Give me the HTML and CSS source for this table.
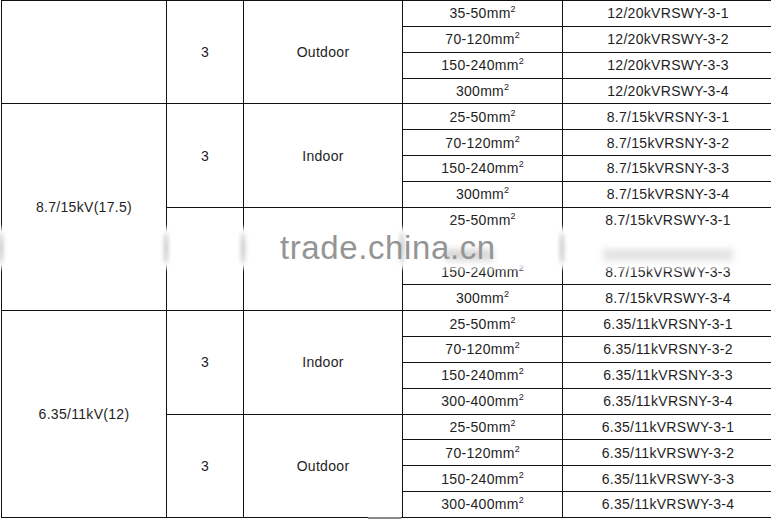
FILE: index.html
```html
<!DOCTYPE html>
<html>
<head>
<meta charset="utf-8">
<link rel="stylesheet" href="styles.css">
</head>
<body>
<div class="page">
  <table class="spec">
    <colgroup>
      <col class="c1"><col class="c2"><col class="c3"><col class="c4"><col class="c5">
    </colgroup>
    <tbody>
      <tr><td rowspan="4"></td><td rowspan="4">3</td><td rowspan="4">Outdoor</td><td>35-50mm<sup>2</sup></td><td>12/20kVRSWY-3-1</td></tr>
      <tr><td>70-120mm<sup>2</sup></td><td>12/20kVRSWY-3-2</td></tr>
      <tr><td>150-240mm<sup>2</sup></td><td>12/20kVRSWY-3-3</td></tr>
      <tr><td>300mm<sup>2</sup></td><td>12/20kVRSWY-3-4</td></tr>

      <tr><td rowspan="8">8.7/15kV(17.5)</td><td rowspan="4">3</td><td rowspan="4">Indoor</td><td>25-50mm<sup>2</sup></td><td>8.7/15kVRSNY-3-1</td></tr>
      <tr><td>70-120mm<sup>2</sup></td><td>8.7/15kVRSNY-3-2</td></tr>
      <tr><td>150-240mm<sup>2</sup></td><td>8.7/15kVRSNY-3-3</td></tr>
      <tr><td>300mm<sup>2</sup></td><td>8.7/15kVRSNY-3-4</td></tr>
      <tr><td rowspan="4"></td><td rowspan="4"></td><td>25-50mm<sup>2</sup></td><td>8.7/15kVRSWY-3-1</td></tr>
      <tr><td></td><td></td></tr>
      <tr><td>150-240mm<sup>2</sup></td><td>8.7/15kVRSWY-3-3</td></tr>
      <tr><td>300mm<sup>2</sup></td><td>8.7/15kVRSWY-3-4</td></tr>

      <tr><td rowspan="8">6.35/11kV(12)</td><td rowspan="4">3</td><td rowspan="4">Indoor</td><td>25-50mm<sup>2</sup></td><td>6.35/11kVRSNY-3-1</td></tr>
      <tr><td>70-120mm<sup>2</sup></td><td>6.35/11kVRSNY-3-2</td></tr>
      <tr><td>150-240mm<sup>2</sup></td><td>6.35/11kVRSNY-3-3</td></tr>
      <tr><td>300-400mm<sup>2</sup></td><td>6.35/11kVRSNY-3-4</td></tr>
      <tr><td rowspan="4">3</td><td rowspan="4">Outdoor</td><td>25-50mm<sup>2</sup></td><td>6.35/11kVRSWY-3-1</td></tr>
      <tr><td>70-120mm<sup>2</sup></td><td>6.35/11kVRSWY-3-2</td></tr>
      <tr><td>150-240mm<sup>2</sup></td><td>6.35/11kVRSWY-3-3</td></tr>
      <tr><td>300-400mm<sup>2</sup></td><td>6.35/11kVRSWY-3-4</td></tr>
    </tbody>
  </table>
  <div class="band"></div>
  <div class="ghost g1"></div>
  <div class="ghost g2"></div>
  <div class="ghost g3"></div>
  <div class="ghost g4"></div>
  <div class="ghost g5"></div>
  <div class="smudge smudge-a"></div>
  <div class="smudge smudge-b"></div>
  <div class="watermark">trade.china.cn</div>
  <div class="tab-mark"></div>
</div>
</body>
</html>
```

FILE: styles.css
```css
html, body {
  margin: 0;
  padding: 0;
  background: #fff;
  overflow: hidden;
}
.page {
  position: relative;
  width: 771px;
  height: 519px;
  overflow: hidden;
}
.spec {
  border-collapse: collapse;
  table-layout: fixed;
  width: 772px;
  margin-left: 1px;
  font-family: "Liberation Sans", Arial, sans-serif;
  font-size: 14px;
  letter-spacing: 0.3px;
  color: #1e1e1e;
}
.spec tr { height: 25.85px; }
.c1 { width: 165px; }
.c2 { width: 77px; }
.c3 { width: 159px; }
.c4 { width: 160px; }
.c5 { width: 211px; }
.spec td {
  border: 1px solid #111;
  text-align: center;
  vertical-align: middle;
  padding: 0;
  line-height: 14px;
}
.spec sup {
  font-size: 9px;
  line-height: 0;
  vertical-align: 6px;
  letter-spacing: 0;
}
.band {
  position: absolute;
  left: 0;
  top: 224px;
  width: 771px;
  height: 48px;
  background: linear-gradient(to bottom, rgba(255,255,255,0) 0, #fff 8px, #fff 40px, rgba(255,255,255,0) 48px);
}
.ghost {
  position: absolute;
  top: 232px;
  width: 4px;
  height: 32px;
  background: #c4c4c4;
  border-radius: 50%;
  filter: blur(2px);
}
.g1 { left: -1px; }
.g2 { left: 164px; }
.g3 { left: 241px; }
.g4 { left: 400px; }
.g5 { left: 560px; }
.smudge {
  position: absolute;
  background: #c8c8c8;
  filter: blur(3px);
  opacity: 0.7;
}
.smudge-a { left: 445px; top: 249px; width: 48px; height: 12px; }
.smudge-b { left: 603px; top: 249px; width: 130px; height: 12px; opacity: 0.5; }
.watermark {
  position: absolute;
  left: 280px;
  top: 229px;
  font-family: "Liberation Sans", Arial, sans-serif;
  font-size: 33px;
  letter-spacing: 0.6px;
  line-height: 38px;
  color: #959595;
}
.tab-mark {
  position: absolute;
  left: 368px;
  top: 517px;
  width: 33px;
  height: 2px;
  background: #8a8a8a;
}
```
